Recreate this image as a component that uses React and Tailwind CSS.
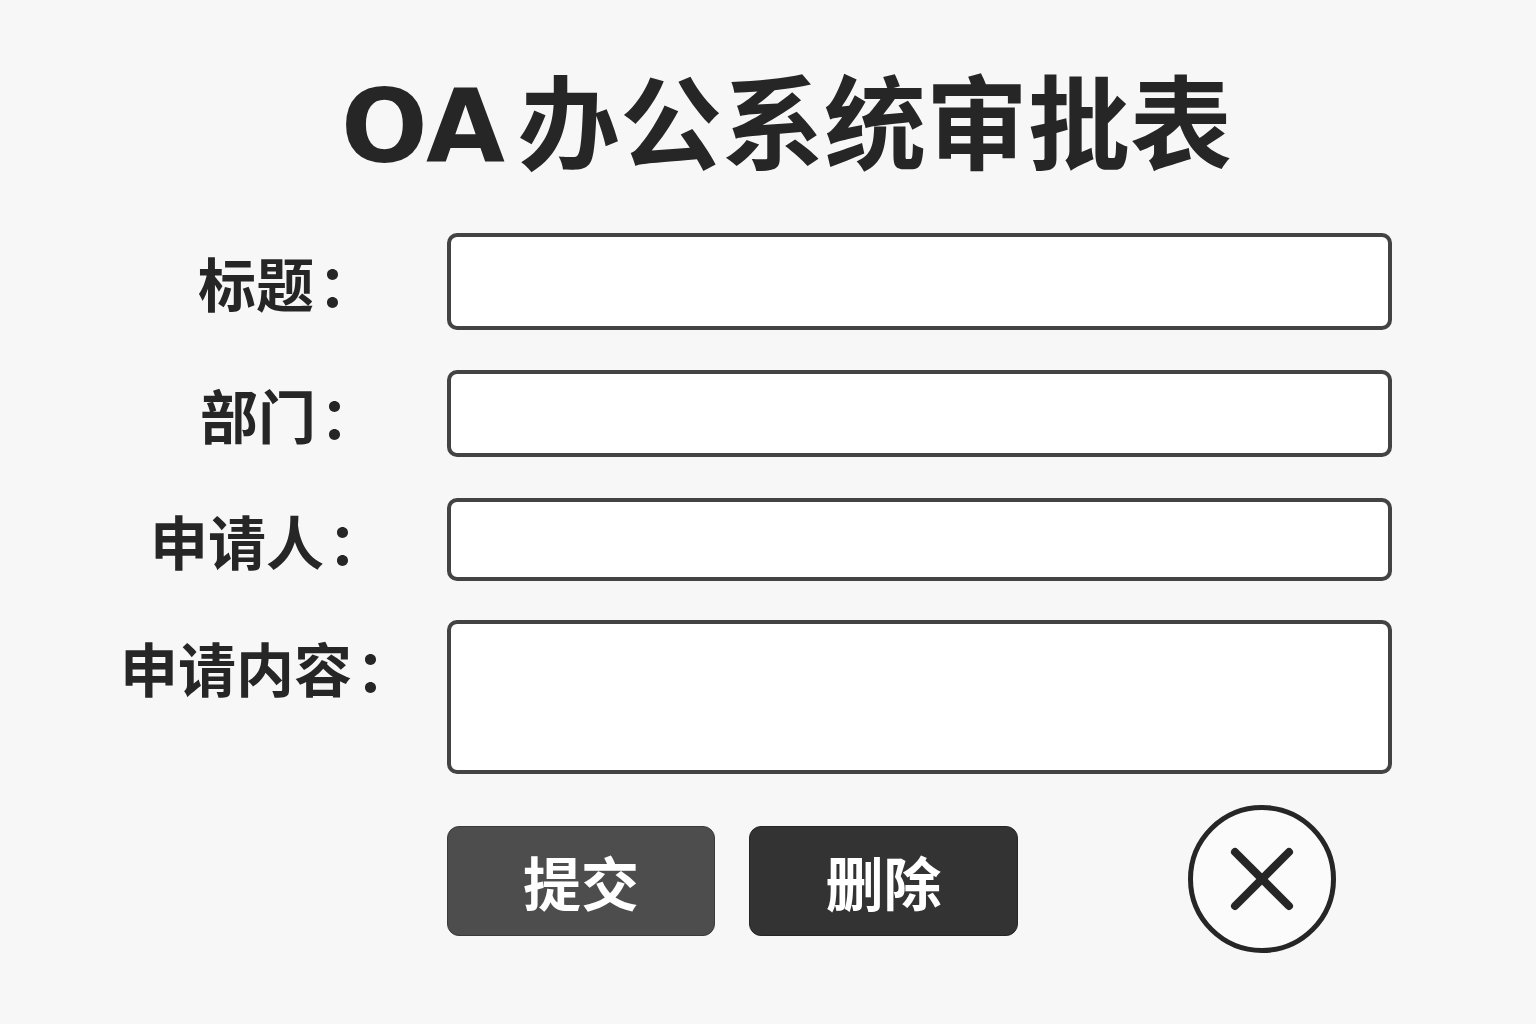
import React from "react";

const font = { fontFamily: '"Noto Sans CJK SC", "Noto Sans", sans-serif' };

export default function App() {
  return (
    <div
      className="w-[1536px] h-[1024px] bg-[#f7f7f7] text-[#262626] flex flex-col overflow-hidden"
      style={font}
    >
      <h1 className="pt-[62px] pl-[341px] text-[102px] leading-[1.1] font-bold text-[#262626] whitespace-nowrap">
        <span className="font-['DejaVu_Sans'] tracking-[1px]">OA</span>
        <span className="ml-[12px]">办公系统审批表</span>
      </h1>

      <div className="mt-[50px] flex flex-col">
        <div className="flex items-center h-[97px]">
          <div className="w-[447px] shrink-0 pl-[198px] text-[58px] font-bold leading-none">标题<span className="ml-[4px]">：</span></div>
          <div className="w-[945px] h-[97px] bg-white border-4 border-[#434343] rounded-[10px]" />
        </div>
        <div className="flex items-center h-[87px] mt-[40px]">
          <div className="w-[447px] shrink-0 pl-[200px] text-[58px] font-bold leading-none">部门<span className="ml-[4px]">：</span></div>
          <div className="w-[945px] h-[87px] bg-white border-4 border-[#434343] rounded-[10px]" />
        </div>
        <div className="flex items-center h-[83px] mt-[41px]">
          <div className="w-[447px] shrink-0 pl-[150px] text-[58px] font-bold leading-none">申请人<span className="ml-[4px]">：</span></div>
          <div className="w-[945px] h-[83px] bg-white border-4 border-[#434343] rounded-[10px]" />
        </div>
        <div className="flex items-start h-[154px] mt-[39px]">
          <div className="w-[447px] shrink-0 pl-[120px] pt-[18px] text-[58px] font-bold leading-none">申请内容<span className="ml-[4px]">：</span></div>
          <div className="w-[945px] h-[154px] bg-white border-4 border-[#434343] rounded-[10px]" />
        </div>
      </div>

      <div className="mt-[35px] pl-[447px] flex items-center">
        <button className="w-[268px] h-[110px] bg-[#4d4d4d] rounded-[12px] text-white text-[58px] font-bold leading-none flex items-center justify-center border border-[#3a3a3a]">
          提交
        </button>
        <button className="ml-[34px] w-[269px] h-[110px] bg-[#333333] rounded-[12px] text-white text-[58px] font-bold leading-none flex items-center justify-center border border-[#262626]">
          删除
        </button>
        <div className="ml-[170px] w-[148px] h-[148px] -mt-[4px] rounded-full border-[5px] border-[#262626] bg-[#fbfbfb] flex items-center justify-center">
          <svg width="70" height="70" viewBox="0 0 70 70">
            <line x1="8" y1="8" x2="62" y2="62" stroke="#262626" strokeWidth="8" strokeLinecap="round" />
            <line x1="62" y1="8" x2="8" y2="62" stroke="#262626" strokeWidth="8" strokeLinecap="round" />
          </svg>
        </div>
      </div>
    </div>
  );
}
